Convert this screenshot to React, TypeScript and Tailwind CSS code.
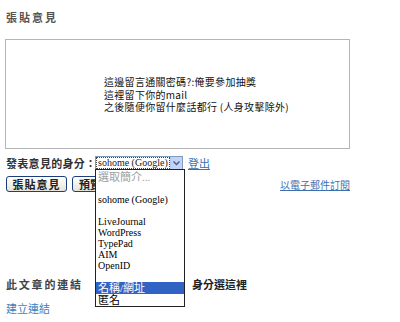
const SANS = { fontFamily: '"Noto Sans CJK TC", "Liberation Sans", sans-serif' }
const SERIF = { fontFamily: '"Liberation Serif", "Noto Sans CJK TC", serif' }

const OPTIONS: { label: string; muted?: boolean; selected?: boolean; cjk?: boolean }[] = [
  { label: '選取簡介...', muted: true, cjk: true },
  { label: '' },
  { label: 'sohome (Google)' },
  { label: '' },
  { label: 'LiveJournal' },
  { label: 'WordPress' },
  { label: 'TypePad' },
  { label: 'AIM' },
  { label: 'OpenID' },
  { label: '' },
  { label: '名稱/網址', selected: true, cjk: true },
  { label: '匿名', cjk: true },
]

export default function App() {
  return (
    <div
      className="w-[400px] h-[322px] overflow-hidden bg-white pl-[6px] text-[#222] whitespace-nowrap"
      style={SANS}
    >
      <h2 className="pt-[11px] text-[11px] leading-[12px] font-bold tracking-[2px] text-[#555]">張貼意見</h2>

      {/* comment box */}
      <div className="mt-[16px] -ml-px w-[345px] h-[110px] border border-[#b5b5b5] pt-[36px] pl-[98px] text-[10px] leading-[12.5px] tracking-[0.3px] text-[#111]">
        <p>這邊留言通關密碼?:俺要參加抽獎</p>
        <p>這裡留下你的mail</p>
        <p>之後隨便你留什麼話都行 (人身攻擊除外)</p>
      </div>

      {/* identity row */}
      <div className="mt-[7px] flex items-center h-[14px]">
        <span className="shrink-0 w-[89px] text-[11px] leading-[12px] font-bold tracking-[0.3px] text-[#333]">發表意見的身分：</span>
        <div className="relative shrink-0 w-[88px] h-[14px] border border-[#7f9db9] flex">
          <div
            className="flex-1 flex items-center pl-[1px] text-[10px] leading-[10px] border border-dotted border-[#444] overflow-hidden"
            style={SERIF}
          >
            sohome (Google)
          </div>
          <div className="w-[12px] bg-[#c1d3fb] border-l border-[#b4c6ec] flex items-center justify-center">
            <svg width="7" height="5" viewBox="0 0 7 5">
              <path d="M0.5 0.5 L3.5 3.5 L6.5 0.5" fill="none" stroke="#4d6185" strokeWidth="1.5" />
            </svg>
          </div>

          {/* open list */}
          <ul
            className="absolute left-[-1px] top-[12px] w-[90px] border border-[#222] bg-white z-10 pt-[1px]"
            style={SERIF}
          >
            {OPTIONS.map((o, i) => (
              <li
                key={i}
                className={`pl-[2px] ${o.cjk ? 'h-[12px] leading-[12px] text-[11px]' : 'h-[11px] leading-[11px] text-[10px]'} ${
                  o.selected ? 'bg-[#3163c5] text-white' : o.muted ? 'text-[#a0a0a0]' : 'text-black'
                }`}
              >
                {o.label}
              </li>
            ))}
          </ul>
        </div>
        <a className="ml-[5px] text-[11px] leading-[12px] text-[#3a6fb0] underline">登出</a>
      </div>

      {/* buttons */}
      <div className="mt-[6px] w-[344px] h-[16px] flex items-start justify-between">
        <div className="flex gap-[5px]">
          <button className="w-[61px] h-[16px] rounded-[3px] border border-[#1c3f7c] bg-gradient-to-b from-white to-[#e6e3d9] text-[11px] leading-[14px] font-bold tracking-[1px]">
            張貼意見
          </button>
          <button className="w-[40px] h-[16px] rounded-[3px] border border-[#1c3f7c] bg-gradient-to-b from-white to-[#e6e3d9] text-[11px] leading-[14px] font-bold text-left pl-[6px]">
            預覽
          </button>
        </div>
        <a className="mt-[3px] text-[10px] leading-[12px] text-[#3a6fb0] underline">以電子郵件訂閱</a>
      </div>

      {/* links section */}
      <div className="mt-[86px] flex items-center h-[12px]">
        <span className="w-[186px] text-[11px] leading-[12px] font-bold tracking-[1.8px] text-[#444]">此文章的連結</span>
        <span className="text-[11px] leading-[12px] font-bold text-[#222]">身分選這裡</span>
      </div>
      <a className="block mt-[12px] text-[11px] leading-[12px] text-[#3a7fc0]">建立連結</a>
    </div>
  )
}
